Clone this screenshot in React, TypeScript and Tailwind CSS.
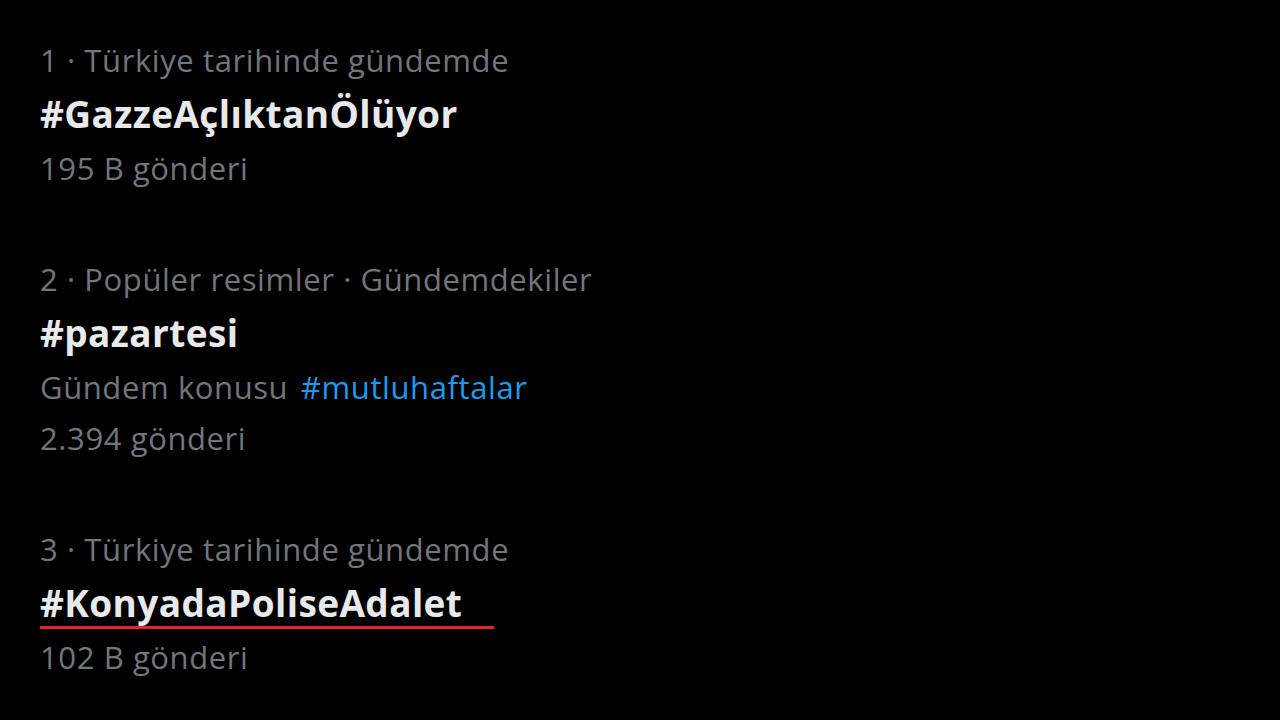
import React from 'react';

const font = { fontFamily: '"Open Sans", "Noto Sans", sans-serif' };

const Meta: React.FC<{ children: React.ReactNode }> = ({ children }) => (
  <div className="text-[31px] leading-[54px] text-[#71767b] tracking-[0.6px]">{children}</div>
);

const Title: React.FC<{ children: React.ReactNode }> = ({ children }) => (
  <div className="text-[37px] leading-[54px] font-bold text-[#e7e9ea] tracking-[0.4px]">{children}</div>
);

export default function App() {
  return (
    <div className="w-[1280px] h-[720px] bg-black overflow-hidden px-[40px] pt-[33px]" style={font}>
      <div>
        <Meta>1 · Türkiye tarihinde gündemde</Meta>
        <Title>#GazzeAçlıktanÖlüyor</Title>
        <Meta>195 B gönderi</Meta>
      </div>

      <div className="mt-[57px]">
        <Meta>2 · Popüler resimler · Gündemdekiler</Meta>
        <Title>#pazartesi</Title>
        <Meta>
          Gündem konusu <span className="ml-1 text-[#1d9bf0]">#mutluhaftalar</span>
        </Meta>
        <div className="text-[31px] leading-[48px] text-[#71767b] tracking-[0.6px]">2.394 gönderi</div>
      </div>

      <div className="mt-[60px]">
        <Meta>3 · Türkiye tarihinde gündemde</Meta>
        <div className="relative w-fit">
          <Title>#KonyadaPoliseAdalet</Title>
          <div className="absolute left-0 top-[50px] h-[3px] w-[454px] bg-[#e3262b]" />
        </div>
        <Meta>102 B gönderi</Meta>
      </div>
    </div>
  );
}
